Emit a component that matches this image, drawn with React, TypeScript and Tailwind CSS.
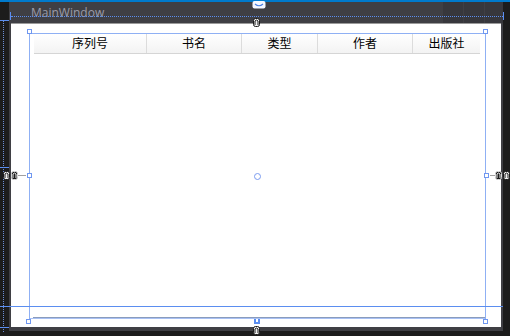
import React from 'react';

const COLUMNS = [
  { title: '序列号', w: 'w-[113px]' },
  { title: '书名', w: 'w-[95px]' },
  { title: '类型', w: 'w-[76px]' },
  { title: '作者', w: 'w-[95px]' },
  { title: '出版社', w: 'w-[67px]' },
];

function Handle({ className }: { className: string }) {
  return <div className={`absolute h-[5px] w-[5px] border border-[#6f97f0] bg-white ${className}`} />;
}

function Anchor({ className, light }: { className: string; light?: boolean }) {
  // pin glyph the designer draws on each margin
  return (
    <svg className={`absolute ${className}`} width="7" height="9" viewBox="0 0 7 9">
      <rect x="0.5" y="0.5" width="6" height="8" rx="2" fill={light ? '#f0f0f0' : '#1a1a1a'} stroke={light ? '#1a1a1a' : '#d8d8d8'} />
      <path d="M2 7 L2 3 Q3.5 1 5 3 L5 7" stroke={light ? '#1a1a1a' : '#f0f0f0'} strokeWidth="1" fill="none" />
    </svg>
  );
}

export default function App() {
  return (
    <div className="relative h-[336px] w-[510px] overflow-hidden bg-[#1c1c1c]" style={{ fontFamily: '"Liberation Sans", "Noto Sans CJK SC", sans-serif' }}>
      <div className="h-[2px] bg-[#007acc]" />
      <div className="flex">
        <div className="w-[9px]" />
        <div className="flex h-[329px] w-[494px] flex-col bg-[#3f3f44]">
          <div className="flex h-[21px] items-center">
            <span className="pl-[22px] pt-[1px] text-[12px] text-[#9c9ca8]" style={{ fontFamily: '"Open Sans", "Liberation Sans", sans-serif' }}>MainWindow</span>
            <div className="ml-auto flex h-full gap-px">
              <div className="w-[20px] bg-[#37373c]" />
              <div className="w-[20px] bg-[#37373c]" />
              <div className="w-[18px] bg-[#37373c]" />
            </div>
          </div>
          <div className="mx-[2px] mb-[4px] flex-1 border-t border-[#9a9a9a] bg-white pl-[23px] pt-[10px]">
            <div className="flex h-[20px] w-[446px] border-b border-[#d5d5d5] bg-gradient-to-b from-white to-[#f3f3f3]">
              {COLUMNS.map((c, i) => (
                <div key={c.title} className={`${c.w} flex items-center justify-center text-[12px] text-black ${i < COLUMNS.length - 1 ? 'border-r border-[#dcdcdc]' : ''}`}>
                  {c.title}
                </div>
              ))}
            </div>
          </div>
        </div>
      </div>

      {/* designer adorners, drawn over the window */}
      <div className="absolute left-[3px] top-[20px] h-[312px] border-l border-dotted border-[#6c8fd8]" />
      <div className="absolute left-0 top-[20px] h-px w-[9px] bg-[#5b8ef0]" />
      <div className="absolute left-[10px] top-[12px] h-[8px] w-[494px] border-x border-[#5b8ef0]">
        <div className="mt-[4px] border-t border-dotted border-[#5b8ef0]" />
      </div>

      <div className="absolute left-[29px] top-[33px] h-[287px] w-[457px] border-x border-t border-[#8fb0f4]">
        <Handle className="-left-[3px] -top-[5px]" />
        <Handle className="-right-[3px] -top-[5px]" />
        <Handle className="-left-[4px] bottom-[-4px]" />
        <Handle className="-right-[3px] bottom-[-4px]" />
        <Handle className="-left-[3px] top-[139px]" />
        <Handle className="-right-[4px] top-[139px]" />
        <div className="absolute bottom-[2px] left-[3px] right-0 h-px bg-[#8a9cbc]" />
        <div className="absolute bottom-[1px] left-0 right-0 h-px bg-[#a8c0f4]" />
        <div className="absolute left-[224px] top-[139px] h-[7px] w-[7px] rounded-full border border-[#7b9cf0]" />
      </div>

      <div className="absolute left-0 top-[306px] h-px w-[503px] bg-[#5b8ef0]" />
      <div className="absolute left-0 top-[327px] h-px w-[9px] bg-[#5b8ef0]" />
      <div className="absolute left-0 top-[167px] h-px w-[9px] bg-[#5b8ef0]" />

      <div className="absolute left-[18px] top-[175px] h-px w-[8px] bg-[#a0a0a0]" />
      <div className="absolute left-[490px] top-[175px] h-px w-[6px] bg-[#a0a0a0]" />
      <Anchor className="left-[3px] top-[171px]" light />
      <Anchor className="left-[11px] top-[171px]" />
      <Anchor className="left-[495px] top-[171px]" />
      <Anchor className="left-[503px] top-[171px]" light />
      <Anchor className="left-[253px] top-[18px]" light />
      <Anchor className="left-[253px] top-[326px]" light />

      <svg className="absolute left-[252px] top-[1px]" width="14" height="8" viewBox="0 0 14 8">
        <rect x="0.5" y="0" width="13" height="7.5" rx="2" fill="#f4f7ff" />
        <path d="M3 3 Q7 6.5 11 3" stroke="#4a7fe0" strokeWidth="1.2" fill="none" />
      </svg>
      <div className="absolute left-[254px] top-[319px] h-[5px] w-[6px] border-x-2 border-b-2 border-[#5b8ef0]" />
    </div>
  );
}
